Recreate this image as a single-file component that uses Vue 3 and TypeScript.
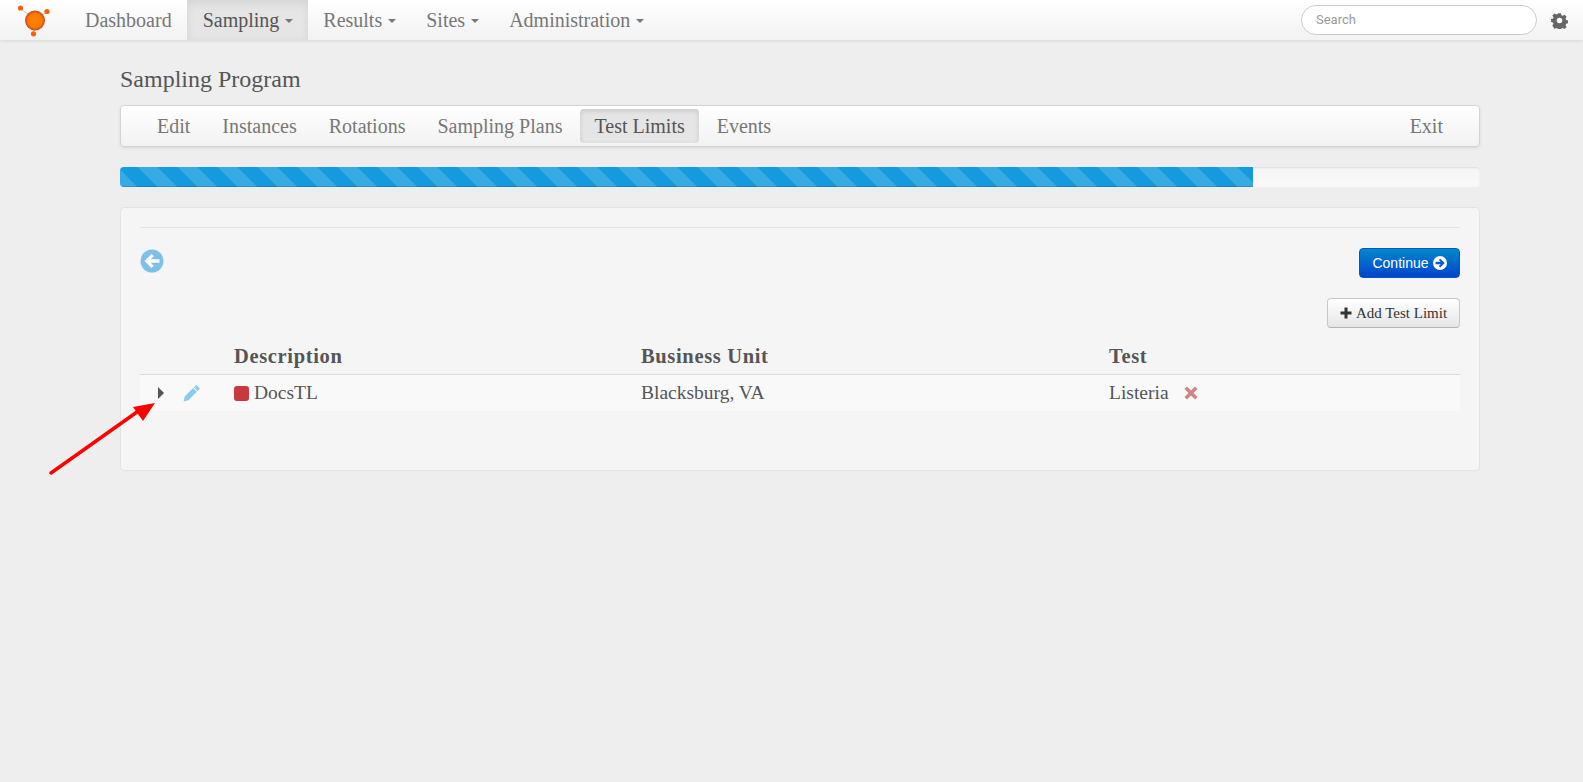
<script setup lang="ts">
import { ref } from 'vue'

interface NavItem {
  label: string
  caret: boolean
  active?: boolean
}

const navItems = ref<NavItem[]>([
  { label: 'Dashboard', caret: false },
  { label: 'Sampling', caret: true, active: true },
  { label: 'Results', caret: true },
  { label: 'Sites', caret: true },
  { label: 'Administration', caret: true }
])

const subTabs = ['Edit', 'Instances', 'Rotations', 'Sampling Plans', 'Test Limits', 'Events']
const activeTab = ref('Test Limits')
const progress = ref(83.3)
</script>

<template>
  <div class="page">
    <header class="navbar">
      <svg class="logo" width="36" height="40" viewBox="0 0 36 40">
        <defs>
          <radialGradient id="ball" cx="50%" cy="50%" r="50%">
            <stop offset="0%" stop-color="#ff8400" />
            <stop offset="70%" stop-color="#f77a00" />
            <stop offset="100%" stop-color="#c9421a" />
          </radialGradient>
        </defs>
        <path d="M3 8 L18 20 M30 12 L18 20 M16.500 34 L18 20" stroke="#c8bdb5" stroke-width="1" />
        <circle cx="18" cy="20.500" r="10" fill="url(#ball)" />
        <circle cx="3.500" cy="8" r="2.600" fill="#f4610c" />
        <circle cx="30" cy="11.500" r="2.600" fill="#f4610c" />
        <circle cx="16.500" cy="33.800" r="2.600" fill="#f4610c" />
      </svg>
      <nav class="main-nav">
        <a v-for="item in navItems" :key="item.label" class="nav-link" :class="{ active: item.active }">
          {{ item.label }}<span v-if="item.caret" class="caret"></span>
        </a>
      </nav>
      <div class="nav-right">
        <input class="search" type="text" placeholder="Search">
        <svg class="gear" width="17" height="17" viewBox="0 0 24 24">
          <path fill="#666" fill-rule="evenodd" d="M9.600 0h4.800l.7 3.300 2.300 1 2.900-1.800 3.400 3.400-1.800 2.900 1 2.300 3.100.7v4.800l-3.100.7-1 2.300 1.800 2.900-3.400 3.400-2.900-1.800-2.300 1-.7 3.100H9.600l-.7-3.100-2.300-1-2.900 1.800L.3 20.300l1.800-2.900-1-2.300L-2 14.400V9.600l3.100-.7 1-2.300L.3 3.900 3.700.5l2.900 1.800 2.300-1zM12 7.500a4.500 4.500 0 1 0 0 9 4.500 4.500 0 0 0 0-9z" transform="translate(1.700 1.700) scale(.86)" />
        </svg>
      </div>
    </header>

    <main class="container">
      <h1 class="title">Sampling Program</h1>

      <div class="subnav">
        <div class="subnav-tabs">
          <a v-for="tab in subTabs" :key="tab" class="subnav-link" :class="{ active: tab === activeTab }">{{ tab }}</a>
        </div>
        <a class="subnav-link exit">Exit</a>
      </div>

      <div class="progress">
        <div class="bar" :style="{ width: progress + '%' }"></div>
      </div>

      <section class="well">
        <hr class="rule">
        <div class="actions">
          <svg class="back" width="24" height="24" viewBox="0 0 24 24">
            <circle cx="12" cy="12" r="11.500" fill="#7fc0e6" />
            <path d="M11.500 5 L4.500 12 L11.500 19 L13.800 16.700 L10.700 13.800 H19.500 V10.200 H10.700 L13.800 7.300 Z" fill="#fff" />
          </svg>
          <button class="btn-primary" type="button">
            Continue
            <svg width="14" height="14" viewBox="0 0 24 24">
              <circle cx="12" cy="12" r="12" fill="#fff" />
              <path d="M12.500 4.500 L20 12 L12.500 19.500 L10 17 L13.300 14 H4.500 V10 H13.300 L10 7 Z" fill="#0a5bc8" />
            </svg>
          </button>
        </div>
        <div class="add-row">
          <button class="btn-default" type="button">
            <svg width="12" height="12" viewBox="0 0 12 12">
              <path d="M4.500 0.500 H7.500 V4.500 H11.500 V7.500 H7.500 V11.500 H4.500 V7.500 H0.500 V4.500 H4.500 Z" fill="#333" />
            </svg>
            Add Test Limit
          </button>
        </div>

        <div class="table">
          <div class="table-row head">
            <div></div>
            <div>Description</div>
            <div>Business Unit</div>
            <div>Test</div>
          </div>
          <div class="table-row body">
            <div class="row-tools">
              <svg width="8" height="12" viewBox="0 0 8 12">
                <path d="M1 0 L7 6 L1 12 Z" fill="#555" />
              </svg>
              <svg width="17" height="17" viewBox="0 0 17 17">
                <path d="M12.500 .8 a1.200 1.200 0 0 1 1.700 0 l2 2 a1.200 1.200 0 0 1 0 1.700 l-1.500 1.500 -3.700 -3.700 z M10.200 3.100 l3.700 3.700 -8.500 8.500 -4.800 1.200 1.100 -4.900 z" fill="#8accee" />
              </svg>
            </div>
            <div class="desc"><span class="swatch"></span>DocsTL</div>
            <div>Blacksburg, VA</div>
            <div class="test-cell">
              Listeria
              <svg width="14" height="14" viewBox="0 0 14 14">
                <path d="M3 .5 L7 4.500 L11 .5 L13.500 3 L9.500 7 L13.500 11 L11 13.500 L7 9.500 L3 13.500 L.5 11 L4.500 7 L.5 3 Z" fill="#cd8585" />
              </svg>
            </div>
          </div>
        </div>
      </section>
    </main>

    <svg class="annotation" width="120" height="80" viewBox="0 0 120 80">
      <line x1="2" y1="72" x2="88" y2="11" stroke="#f00" stroke-width="3.500" stroke-linecap="round" />
      <polygon points="106,2 84,6 94,20" fill="#f00" />
    </svg>
  </div>
</template>

<style>
html,
body {
  margin: 0;
  background: #eee;
}
</style>

<style scoped>
.page {
  position: relative;
  min-height: 782px;
  background: #eee;
  font-family: "Liberation Serif", serif;
  color: #555;
}

.navbar {
  display: flex;
  align-items: center;
  height: 40px;
  padding-left: 17px;
  background: linear-gradient(#fff, #f2f2f2);
  box-shadow: 0 1px 3px rgba(0, 0, 0, 0.1);
}

.logo {
  flex: none;
}

.main-nav {
  display: flex;
  height: 100%;
  margin-left: 16.5px;
}

.nav-link {
  display: flex;
  align-items: center;
  padding: 0 15.5px;
  font-size: 20px;
  color: #777;
}

.nav-link.active {
  color: #555;
  background: #e5e5e5;
  box-shadow: inset 0 3px 8px rgba(0, 0, 0, 0.08);
}

.caret {
  width: 0;
  height: 0;
  margin-left: 6px;
  margin-right: -1px;
  margin-top: 2px;
  border-top: 4px solid #777;
  border-left: 4px solid transparent;
  border-right: 4px solid transparent;
}

.nav-right {
  display: flex;
  align-items: center;
  gap: 14px;
  margin-left: auto;
  padding-right: 15px;
}

.search {
  width: 236px;
  height: 30px;
  box-sizing: border-box;
  padding: 0 14px 2px;
  border: 1px solid #ccc;
  border-radius: 15px;
  background: #fff;
  font-family: Roboto, sans-serif;
  font-size: 13px;
  outline: none;
}

.search::placeholder {
  color: #999;
}

.container {
  width: 1360px;
  margin-left: 120px;
}

.title {
  margin: 0;
  padding-top: 24px;
  height: 41px;
  line-height: 30px;
  font-size: 24px;
  font-weight: 400;
  color: #555;
}

.subnav {
  display: flex;
  justify-content: space-between;
  align-items: center;
  box-sizing: border-box;
  height: 42px;
  padding: 0 22px 0 22px;
  border: 1px solid #d4d4d4;
  border-radius: 4px;
  background: linear-gradient(#fff, #f2f2f2);
  box-shadow: 0 1px 3px rgba(0, 0, 0, 0.1);
}

.subnav-tabs {
  display: flex;
  align-items: center;
  gap: 4px;
}

.subnav-link {
  padding: 6px 14px;
  border-radius: 4px;
  font-size: 20px;
  line-height: 22px;
  color: #777;
}

.subnav-link.active {
  color: #555;
  background: #e5e5e5;
  box-shadow: inset 0 2px 5px rgba(0, 0, 0, 0.12);
}

.progress {
  height: 20px;
  margin-top: 20px;
  border-radius: 4px;
  overflow: hidden;
  background: linear-gradient(#f5f5f5, #f9f9f9);
  box-shadow: inset 0 1px 2px rgba(0, 0, 0, 0.1);
}

.bar {
  box-sizing: border-box;
  height: 100%;
  background-color: #149bdf;
  background-image: linear-gradient(45deg, rgba(255, 255, 255, 0.15) 25%, transparent 25%, transparent 50%, rgba(255, 255, 255, 0.15) 50%, rgba(255, 255, 255, 0.15) 75%, transparent 75%, transparent);
  background-size: 40px 40px;
  background-position: 18px 0;
  box-shadow: inset 0 -1px 0 rgba(0, 0, 0, 0.15);
}

.well {
  box-sizing: border-box;
  height: 264px;
  margin-top: 20px;
  padding: 19px 19px 0 19px;
  border: 1px solid #e3e3e3;
  border-radius: 4px;
  background: #f5f5f5;
}

.rule {
  margin: 0;
  border: 0;
  border-top: 1px solid #e2e2e2;
}

.actions {
  display: flex;
  justify-content: space-between;
  align-items: flex-start;
  margin-top: 20px;
}

.back {
  margin-top: 1px;
}

.btn-primary {
  display: flex;
  align-items: center;
  justify-content: center;
  gap: 4px;
  width: 101px;
  height: 30px;
  padding: 0;
  border: 1px solid #0a55b8;
  border-radius: 4px;
  background: linear-gradient(#0088cc, #0044cc);
  color: #fff;
  font-family: "Liberation Sans", sans-serif;
  font-size: 14px;
}

.add-row {
  display: flex;
  justify-content: flex-end;
  margin-top: 20px;
}

.btn-default {
  display: flex;
  align-items: center;
  justify-content: center;
  gap: 4px;
  width: 133px;
  height: 30px;
  padding: 0;
  border: 1px solid #c8c8c8;
  border-bottom-color: #b3b3b3;
  border-radius: 4px;
  background: linear-gradient(#fff, #e6e6e6);
  color: #333;
  font-family: "Liberation Serif", serif;
  font-size: 15px;
}

.table {
  margin-top: 10px;
}

.table-row {
  display: grid;
  grid-template-columns: 94px 407px 468px 1fr;
  align-items: center;
}

.head {
  height: 36px;
  border-bottom: 1px solid #ddd;
  font-size: 20.5px;
  font-weight: 700;
  letter-spacing: 0.65px;
}

.body {
  height: 36px;
  background: #f9f9f9;
  font-size: 19.5px;
}

.row-tools {
  display: flex;
  align-items: center;
  gap: 18px;
  padding-left: 17px;
}

.desc,
.test-cell {
  display: flex;
  align-items: center;
}

.swatch {
  width: 15px;
  height: 15px;
  margin-right: 5px;
  border-radius: 3px;
  background: #c9383d;
}

.test-cell svg {
  margin-left: 15px;
}

.annotation {
  position: absolute;
  left: 49px;
  top: 401px;
}
</style>
